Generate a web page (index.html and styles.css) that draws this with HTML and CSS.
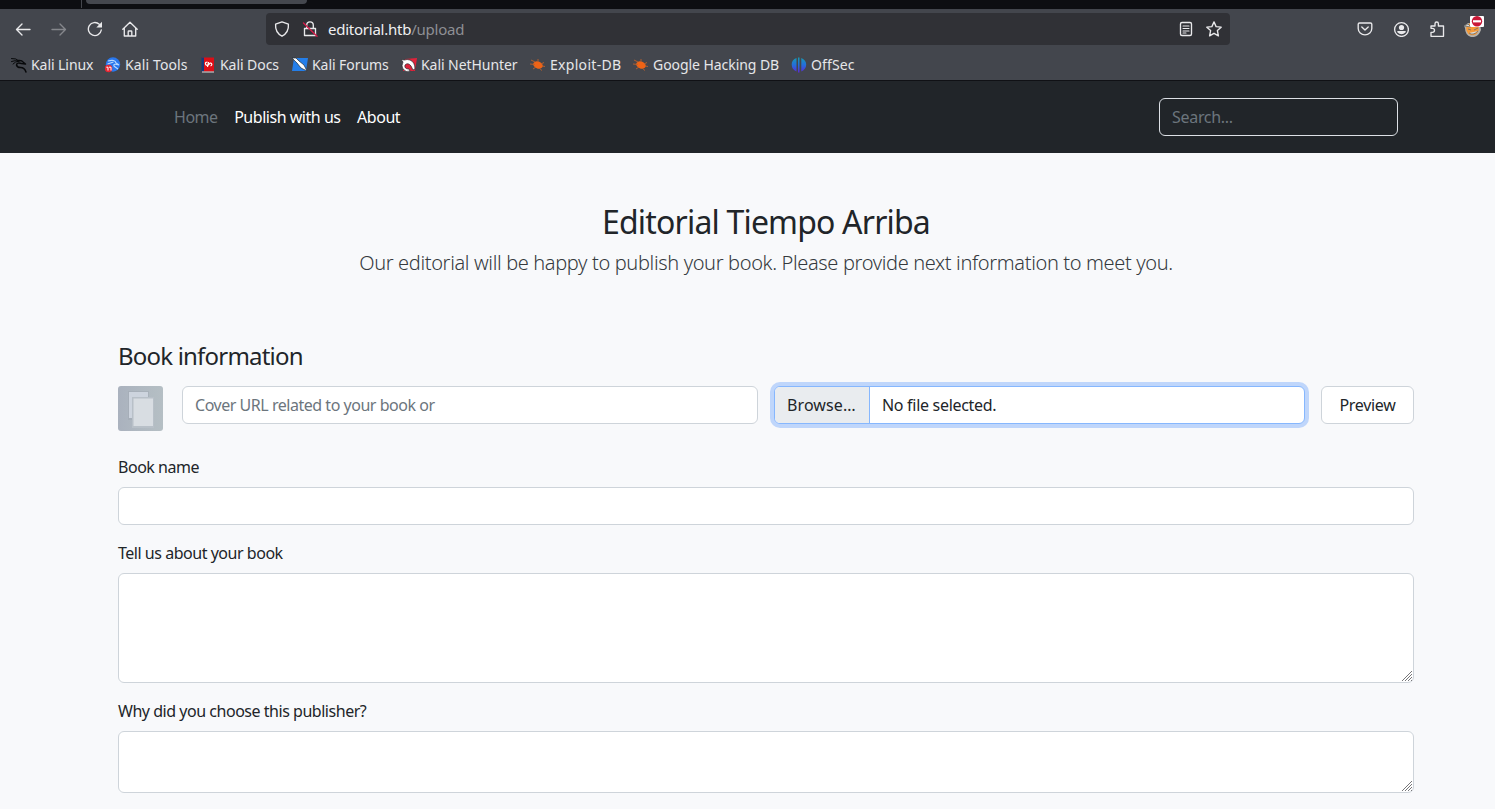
FILE: index.html
```
<!DOCTYPE html>
<html lang="en">
<head>
<meta charset="utf-8">
<title>Editorial Tiempo Arriba</title>
<link rel="stylesheet" href="styles.css">
</head>
<body>
<div class="tabstrip"><span class="tab-divider"></span><span class="tab-active"></span></div>
<div class="toolbar">
  <div class="nav-icons">
    <svg class="icon" viewBox="0 0 16 16"><path d="M15 8.500H1.500M7 3 1.500 8.500 7 14"/></svg>
    <svg class="icon disabled" viewBox="0 0 16 16"><path d="M1 8.500h13.500M9 3l5.500 5.500L9 14"/></svg>
    <svg class="icon" viewBox="0 0 16 16"><path d="M14.300 9A6.500 6.500 0 1 1 12.300 3.300"/><path class="solid" d="M15 .8v5.700H9.300z"/></svg>
    <svg class="icon home" viewBox="0 0 16 16"><path d="M.8 8.200 8 1.200l7.200 7M2.300 7v8h11.400V7M6.200 15v-4.300q0-.7.7-.7h2.200q.7 0 .7.700V15"/></svg>
  </div>
  <div class="urlbar">
    <svg class="icon" viewBox="0 0 16 16"><path d="M8 .9 14.400 3.200c.4 5-1 9-6.400 12C2.600 12.200 1.200 8.200 1.600 3.200z"/></svg>
    <svg class="icon lock" viewBox="0 0 16 16"><path d="M4.700 7V4.200a3.300 3.300 0 0 1 6.600 0V7M2.500 7.500h11v7h-11z"/><path class="slash" d="M1.500 2 15 15.300"/></svg>
    <span class="url">editorial.htb<span class="path">/upload</span></span>
    <svg class="icon reader" viewBox="0 0 16 16"><rect x="2.500" y="1.500" width="11" height="13" rx="1.500"/><path d="M5 5h6M5 7.500h6M5 10h6M5 12h3" stroke-width="1.100"/></svg>
    <svg class="icon" viewBox="0 0 16 16"><path d="m8 .9 2.100 4.700 5.100.6-3.800 3.400 1 5.300L8 12.300l-4.400 2.600 1-5.300L.8 6.200l5.100-.6z"/></svg>
  </div>
  <div class="actions">
    <svg class="icon" viewBox="0 0 16 16"><path d="M2.500 2h11q1.300 0 1.300 1.300V7.500a6.800 6.300 0 0 1-13.600 0V3.300Q1.200 2 2.500 2zM4.800 6 8 9l3.200-3"/></svg>
    <svg class="icon" viewBox="0 0 16 16"><circle cx="8.500" cy="8.500" r="6.900"/><circle class="fill" cx="8.500" cy="6.500" r="2.600"/><path class="fill" d="M4.300 10h8.400v1.200q-4.200 4-8.400 0z"/></svg>
    <svg class="icon" viewBox="0 0 16 16"><path d="M2 15.300v-4h1.500a2 2 0 0 0 0-4H2V5h4V2.700a1.700 1.700 0 0 1 3.400 0V5h5.100v10.300z"/></svg>
    <svg class="fox" viewBox="0 0 20 22"><path d="M0 11 4 8l12 1 1 6q-3 8-10 7-6-2-6-9z" fill="#b4b2ae"/><circle cx="8.500" cy="14" r="6.300" fill="#f59a38"/><path d="m0 11 4-2 3 3zM4 14l3 1M10 15l4-2M5 18q4 3 9-2" stroke="#6b6966" fill="#ddd" stroke-width=".8"/><rect x="6" y="1" width="14" height="11" rx="1" fill="#fff"/><circle cx="13" cy="6.300" r="5.200" fill="#c91837"/><path d="M9 6.300h8" stroke="#fff" stroke-width="2.200"/></svg>
  </div>
</div>
<div class="bookmarks">
  <div class="bookmark"><svg viewBox="0 0 16 16"><g fill="none" stroke="#08090b" stroke-linecap="round" stroke-linejoin="round"><path d="M.5 1.500q5-.5 7.500 2.500M.5 4.500Q4 3 8 4M2 7q2-2.500 6-3"/><path d="M7 3.500q4-.5 5 1.500l2.500 2-4-.5Q6 5 5.500 8q.5 2.500 4 2.500 4 0 5.500 4.500" stroke-width="1.500"/></g></svg><span>Kali Linux</span></div>
  <div class="bookmark wide"><svg viewBox="0 0 16 16"><circle cx="8" cy="7.500" r="7.200" fill="#2977ed"/><path d="M3 4q7-2 8 2l3 2q-6-2-5 1 1 1 4 3M2.500 7l6-2" stroke="#b9d9ff" stroke-width="1.100" fill="none"/><circle cx="3.500" cy="11.500" r="3.800" fill="#e52632"/><path d="M1.300 10.200H3v3.300M4 10.200h2v3.300" stroke="#fff" fill="none"/></svg><span>Kali Tools</span></div>
  <div class="bookmark"><svg viewBox="0 0 16 16"><path d="M2 .5h12v14H2z" fill="#dc0e17"/><path d="M1.500 .5H4v14H1.500z" fill="#143a7b"/><path d="M2 15h12" stroke="#ddd"/><path d="M7.500 5Q5 5 5.500 7t3 1q2-3 3-1.500T10.500 9M8.500 5l-1 5" stroke="#fff" stroke-width="1.200" fill="none"/></svg><span>Kali Docs</span></div>
  <div class="bookmark"><svg viewBox="0 0 16 16"><path d="M2 1h14l-2 13H0z" fill="#247ee9"/><path d="m0 1 4 0 3 3 5 4 3 6-6-3-4-5z" fill="#fff" stroke="#222e39" stroke-width=".7"/></svg><span>Kali Forums</span></div>
  <div class="bookmark"><svg viewBox="0 0 16 16"><path d="m4 2 12-1-2 13H2z" fill="#df233b"/><path d="M3.500 3 0 2.500 2 5q-2 4 0 7 3 4 7 2l-1-2q-5 0-4-4 3-3 6 1l2 4 2-1q0-7-5-9-3-1-5.500 0z" fill="#fff" stroke="#29282e" stroke-width=".7"/></svg><span>Kali NetHunter</span></div>
  <div class="bookmark exploit"><svg viewBox="0 0 16 16"><ellipse cx="8" cy="8" rx="5" ry="3.500" transform="rotate(22 8 8)" fill="#ee6316"/><path d="m1 3 4 2m3-3v3M0 7l5 .5M3 12l3-2M9 11l3 2.500M11 7l3-1.500M12 9l3 .5" stroke="#ba612d" stroke-width=".9"/></svg><span>Exploit-DB</span></div>
  <div class="bookmark"><svg viewBox="0 0 16 16"><ellipse cx="8" cy="8" rx="5" ry="3.500" transform="rotate(22 8 8)" fill="#ee6316"/><path d="m1 3 4 2m3-3v3M0 7l5 .5M3 12l3-2M9 11l3 2.500M11 7l3-1.500M12 9l3 .5" stroke="#ba612d" stroke-width=".9"/></svg><span>Google Hacking DB</span></div>
  <div class="bookmark wide"><svg viewBox="0 0 16 16"><defs><linearGradient id="offsec" gradientUnits="userSpaceOnUse" x1="0" y1="0" x2="0" y2="16"><stop stop-color="#159eb0"/><stop offset=".5" stop-color="#246edb"/><stop offset="1" stop-color="#5e24d6"/></linearGradient></defs><path d="M5.500 1v13.500Q.7 12.500.7 7.500T5.500 1zM7 .5h1.500v15H7zM10.300 1q4.900 2 4.900 6.500t-4.900 7z" fill="url(#offsec)"/></svg><span>OffSec</span></div>
</div>
<header class="site-header">
  <nav class="site-nav"><a class="current">Home</a><a>Publish with us</a><a>About</a></nav>
  <input class="search" placeholder="Search...">
</header>
<main>
  <div class="intro"><h1>Editorial Tiempo Arriba</h1><p>Our editorial will be happy to publish your book. Please provide next information to meet you.</p></div>
  <h2>Book information</h2>
  <div class="cover-row">
    <svg class="thumb" viewBox="0 0 45 45"><defs><linearGradient id="cover"><stop stop-color="#aab2be"/><stop offset="1" stop-color="#b5bfc4"/></linearGradient></defs><rect width="45" height="45" rx="3" fill="url(#cover)"/><path d="M10 5h21v29H10z" fill="#9fa8b2" opacity=".5"/><path d="M11 6h19v26H11z" fill="#cdd4de"/><path d="M14 11h22v31H14z" fill="#b8c0c8"/><path d="M15.500 12.500H35V40H15.500z" fill="#d8dde2"/></svg>
    <input class="field url-field" placeholder="Cover URL related to your book or">
    <div class="file"><span class="browse">Browse…</span><span class="filename">No file selected.</span></div>
    <button class="preview">Preview</button>
  </div>
  <label for="name">Book name</label>
  <input id="name" class="field">
  <label for="about">Tell us about your book</label>
  <div class="area-wrap"><textarea id="about" class="field about"></textarea><svg class="grip" viewBox="0 0 12 12"><path d="M1 11 11 1M4 11l7-7M7 11l4-4M10 11l1-1"/></svg></div>
  <label for="why">Why did you choose this publisher?</label>
  <div class="area-wrap"><textarea id="why" class="field why"></textarea><svg class="grip" viewBox="0 0 12 12"><path d="M1 11 11 1M4 11l7-7M7 11l4-4M10 11l1-1"/></svg></div>
</main>
</body>
</html>
```
FILE: styles.css
```
* { box-sizing: border-box; }
body { margin: 0; height: 809px; overflow: hidden; background: #f8f9fb; color: #212529; font: 16px/24px "Noto Sans", sans-serif; letter-spacing: -.47px; }
input, button, textarea { font: inherit; color: inherit; letter-spacing: inherit; }
svg { display: block; flex: none; }
.tabstrip { display: flex; height: 9px; background: #0d0e12; padding-left: 81px; gap: 4px; }
.tab-divider { width: 1px; height: 8px; background: #44464d; }
.tab-active { width: 221px; height: 4px; background: #44474e; border-radius: 0 0 4px 4px; }
.toolbar { display: flex; align-items: center; height: 40px; background: #43464d; }
.nav-icons { display: flex; gap: 20px; width: 266px; padding-left: 15px; }
.icon { width: 16px; height: 16px; fill: none; stroke: #e9e9eb; stroke-width: 1.35; stroke-linejoin: round; stroke-linecap: round; }
.icon .solid, .icon .fill { fill: #e9e9eb; stroke: none; }
.home { margin-left: -1px; }
.disabled { opacity: .4; }
.urlbar { display: flex; align-items: center; width: 964px; height: 32px; padding: 0 8px; background: #303136; border-radius: 4px; }
.lock { margin-left: 12px; }
.icon .slash { stroke: #d51b49; }
.url { flex: 1; margin-left: 10px; font-size: 15px; letter-spacing: -.24px; color: #efeff1; }
.path { color: #8e8f94; }
.reader { margin-right: 12px; }
.actions { display: flex; align-items: center; gap: 20px; padding-left: 127px; }
.fox { width: 20px; height: 22px; margin: -6px 0 0 -1px; }
.bookmarks { display: grid; grid-template-columns: 94px 95px 92px 109px 129px 103px 158px 80px; height: 32px; padding-left: 11px; background: #43464d; border-bottom: 1px solid #101115; color: #e6e6e9; font-size: 14px; letter-spacing: -.06px; }
.bookmark { display: flex; align-items: center; gap: 4px; white-space: nowrap; }
.bookmark svg { width: 16px; height: 16px; }
.bookmark.wide { letter-spacing: .12px; }
.bookmark.exploit { letter-spacing: .3px; }
.site-header { display: flex; align-items: center; justify-content: space-between; height: 72px; padding: 0 97px 0 174px; background: #212529; }
.site-nav { display: flex; gap: 16.500px; color: #fff; }
.current { color: #6c757d; }
.search { width: 239px; height: 38px; padding: 0 12px; background: #212529; border: 1px solid #dce0e5; border-radius: 6px; color: #fff; letter-spacing: -.3px; }
::placeholder { color: #6c757d; opacity: 1; }
main { width: 1296px; margin-left: 118px; padding-top: 50px; }
h1, h2, p { margin: 0; font-weight: 400; }
.intro { text-align: center; }
h1 { font-size: 32px; line-height: 38px; letter-spacing: -.82px; }
p { margin-top: 7px; font-size: 20px; line-height: 30px; font-weight: 300; letter-spacing: -.35px; color: #353a3e; }
h2 { margin: 63px 0 16px; font-size: 24px; line-height: 29px; letter-spacing: -.8px; }
.cover-row { display: grid; grid-template-columns: 48px 576px 531px 93px; column-gap: 16px; height: 69px; align-items: start; }
.thumb { width: 45px; height: 45px; }
.field { display: block; width: 100%; height: 38px; padding: 0 12px; border: 1px solid #ced4da; border-radius: 6px; background: #fff; outline: 0; }
.file { display: flex; height: 38px; overflow: hidden; background: #fff; border: 1px solid #86b7fe; border-radius: 6px; box-shadow: 0 0 0 4px #bfd6fb; line-height: 36px; letter-spacing: -.3px; }
.browse { width: 95px; padding-left: 12px; background: #e9ecef; border-right: 1px solid #86b7fe; letter-spacing: .1px; }
.filename { padding-left: 12px; }
.preview { width: 93px; height: 38px; padding: 0; border: 1px solid #ced4da; border-radius: 6px; background: #fff; letter-spacing: -.3px; }
label { display: block; margin-bottom: 8px; }
#name, .area-wrap { margin-bottom: 16px; }
.area-wrap { position: relative; }
.about { height: 110px; resize: none; }
.why { height: 62px; resize: none; }
.grip { position: absolute; right: 1px; bottom: 1px; width: 12px; height: 12px; fill: none; stroke: #77777a; stroke-width: 1; }
```
